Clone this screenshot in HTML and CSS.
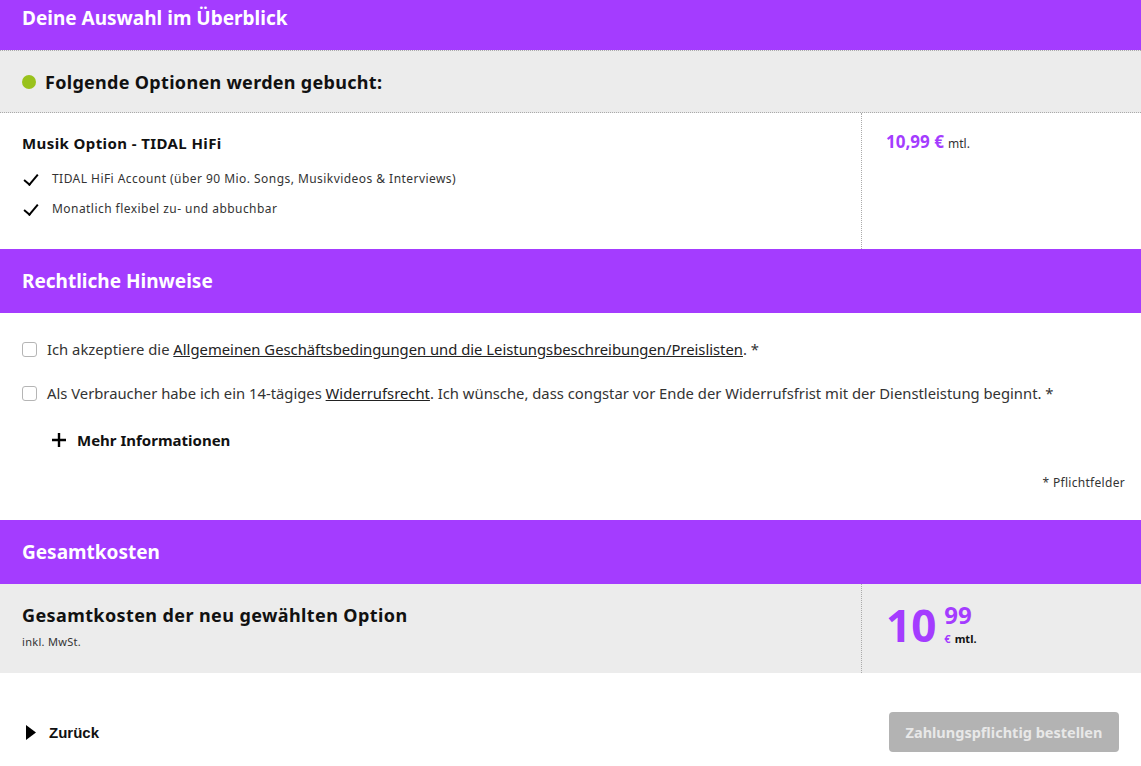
FILE: index.html
```html
<!DOCTYPE html>
<html lang="de">
<head>
    <meta charset="UTF-8">
    <meta name="viewport" content="width=device-width, initial-scale=1.0">
    <title>Deine Auswahl im Überblick</title>
    <link rel="stylesheet" href="styles.css">
</head>
<body>
<div class="page">

    <!-- Auswahl -->
    <div class="section-head">Deine Auswahl im Überblick</div>
    <div class="booked">
        <span class="dot"></span>
        <span>Folgende Optionen werden gebucht:</span>
    </div>
    <div class="row">
        <div class="row-main">
            <div class="option-title">Musik Option - TIDAL HiFi</div>
            <ul class="features">
                <li>TIDAL HiFi Account (über 90 Mio. Songs, Musikvideos &amp; Interviews)</li>
                <li>Monatlich flexibel zu- und abbuchbar</li>
            </ul>
        </div>
        <div class="row-side">
            <span class="price">10,99 €</span> <span class="per">mtl.</span>
        </div>
    </div>

    <!-- Rechtliches -->
    <div class="section-head">Rechtliche Hinweise</div>
    <div class="legal">
        <label class="check">
            <input type="checkbox">
            <span>Ich akzeptiere die <a href="#">Allgemeinen Geschäftsbedingungen und die Leistungsbeschreibungen/Preislisten</a>. *</span>
        </label>
        <label class="check">
            <input type="checkbox">
            <span>Als Verbraucher habe ich ein 14-tägiges <a href="#">Widerrufsrecht</a>. Ich wünsche, dass congstar vor Ende der Widerrufsfrist mit der Dienstleistung beginnt. *</span>
        </label>
        <a href="#" class="more">
            <svg width="14" height="14" viewBox="0 0 14 14"><path d="M7 0v14M0 7h14" stroke="#000" stroke-width="2.4"/></svg>
            Mehr Informationen
        </a>
        <div class="required">* Pflichtfelder</div>
    </div>

    <!-- Gesamtkosten -->
    <div class="section-head">Gesamtkosten</div>
    <div class="row total">
        <div class="row-main">
            <div class="total-title">Gesamtkosten der neu gewählten Option</div>
            <div class="vat">inkl. MwSt.</div>
        </div>
        <div class="row-side">
            <div class="big-price">
                <span class="euros">10</span>
                <span class="cents-box">
                    <span class="cents">99</span>
                    <span class="unit"><span class="eur">€</span><span>mtl.</span></span>
                </span>
            </div>
        </div>
    </div>

    <div class="actions">
        <a href="#" class="back">
            <svg width="10" height="15" viewBox="0 0 10 15"><path d="M0 0L10 7.5L0 15Z" fill="#000"/></svg>
            Zurück
        </a>
        <button type="button" class="order" disabled>Zahlungspflichtig bestellen</button>
    </div>

</div>
</body>
</html>
```

FILE: styles.css
```css
body {
    margin: 0;
    font-family: "Noto Sans", Arial, sans-serif;
    color: #222;
    background: #fff;
}

.page {
    margin-top: -14px;
}

.section-head {
    height: 64px;
    line-height: 64px;
    padding: 0 22px;
    background: #a43cff;
    color: #fff;
    font-size: 19px;
    font-weight: 700;
}

.booked {
    display: flex;
    align-items: center;
    gap: 9px;
    height: 61px;
    padding: 0 22px;
    background: #ececec;
    border-top: 1px dotted #aaa;
    border-bottom: 1px dotted #aaa;
    font-size: 18px;
    font-weight: 700;
    letter-spacing: 0.3px;
    color: #111;
}

.dot {
    width: 14px;
    height: 14px;
    border-radius: 50%;
    background: #99c21c;
}

.row {
    display: flex;
}

.row-main {
    width: 862px;
    padding: 20px 22px 0;
    box-sizing: border-box;
    border-right: 1px dotted #aaa;
}

.row-side {
    flex: 1;
    padding: 18px 24px 0;
}

.row:not(.total) {
    height: 136px;
}

.option-title {
    font-size: 15px;
    line-height: 20px;
    font-weight: 700;
    letter-spacing: 0.4px;
    color: #111;
}

.features {
    list-style: none;
    margin: 11px 0 0;
    padding: 0;
    font-size: 12px;
    letter-spacing: 0.45px;
    color: #333;
}

.features li {
    position: relative;
    padding-left: 30px;
    line-height: 30px;
}

.features li::before {
    content: '';
    position: absolute;
    left: 5px;
    top: 7px;
    width: 6px;
    height: 12px;
    border-right: 2.5px solid #000;
    border-bottom: 2.5px solid #000;
    transform: rotate(40deg);
}

.price {
    color: #a43cff;
    font-size: 17px;
    line-height: 20px;
    font-weight: 700;
}

.per {
    font-size: 12px;
    color: #333;
}

.legal {
    padding: 14px 16px 29px 22px;
    font-size: 14.8px;
    color: #333;
}

.check {
    display: flex;
    align-items: center;
    gap: 10px;
    height: 44px;
}

.check input {
    appearance: none;
    margin: 0;
    width: 15px;
    height: 15px;
    border: 1.5px solid #b5b5b5;
    border-radius: 3px;
    background: #fff;
}

.legal a {
    color: #222;
}

.more {
    display: flex;
    align-items: center;
    gap: 11px;
    height: 20px;
    margin: 15px 0 0 30px;
    font-size: 15px;
    font-weight: 700;
    text-decoration: none;
    color: #111 !important;
}

.required {
    margin-top: 25px;
    line-height: 16px;
    text-align: right;
    font-size: 12px;
    letter-spacing: 0.3px;
    color: #333;
}

.total {
    height: 89px;
    background: #ececec;
}

.total .row-main {
    padding-top: 20px;
}

.total-title {
    font-size: 18px;
    line-height: 22px;
    font-weight: 700;
    letter-spacing: 0.4px;
    color: #111;
}

.vat {
    margin-top: 9px;
    line-height: 14px;
    font-size: 11px;
    letter-spacing: 0.3px;
    color: #333;
}

.total .row-side {
    padding: 19px 24px 0;
}

.big-price {
    display: flex;
    align-items: flex-start;
    gap: 8px;
    color: #a43cff;
    font-weight: 700;
}

.euros {
    font-size: 44px;
    line-height: 44px;
}

.cents-box {
    display: flex;
    flex-direction: column;
    margin-top: -4px;
}

.cents {
    font-size: 24px;
    line-height: 32px;
}

.unit {
    display: flex;
    gap: 4px;
    font-size: 11px;
    line-height: 15px;
    color: #111;
}

.eur {
    color: #a43cff;
}

.actions {
    display: flex;
    justify-content: space-between;
    align-items: center;
    padding: 39px 22px 0 26px;
}

.back {
    display: flex;
    align-items: center;
    gap: 13px;
    font-family: "Liberation Sans", Arial, sans-serif;
    font-size: 15px;
    font-weight: 700;
    color: #111;
    text-decoration: none;
}

.order {
    width: 230px;
    height: 40px;
    border: none;
    border-radius: 4px;
    background: #b3b3b3;
    color: #e8e8e8;
    font-family: "Noto Sans", Arial, sans-serif;
    font-size: 14.5px;
    font-weight: 700;
}
```
